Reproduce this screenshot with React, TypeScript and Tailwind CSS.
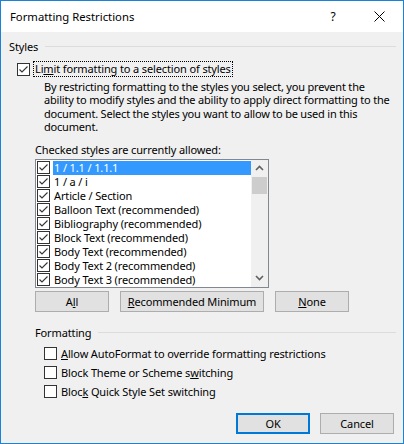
import React from "react";

function Box({ checked, className = "" }: { checked?: boolean; className?: string }) {
  return (
    <div className={"w-[13px] h-[13px] border border-[#333333] bg-white shrink-0 flex items-center justify-center " + className}>
      {checked && (
        <svg width="11" height="11" viewBox="0 0 11 11">
          <polyline points="1.5,5.5 4,8 9.5,2.5" fill="none" stroke="#333333" strokeWidth="1.1" />
        </svg>
      )}
    </div>
  );
}

const items = [
  "1 / 1.1 / 1.1.1",
  "1 / a / i",
  "Article / Section",
  "Balloon Text (recommended)",
  "Bibliography (recommended)",
  "Block Text (recommended)",
  "Body Text (recommended)",
  "Body Text 2 (recommended)",
  "Body Text 3 (recommended)",
  "Book Title",
];

function Btn({ children, className = "" }: { children: React.ReactNode; className?: string }) {
  return (
    <div className={"h-[21px] bg-[#e1e1e1] border border-[#adadad] flex items-center justify-center whitespace-nowrap " + className}>
      {children}
    </div>
  );
}

export default function App() {
  return (
    <div className="w-[404px] h-[444px] border border-[#1883d7] bg-[#f0f0f0] flex flex-col font-['Noto_Sans',sans-serif] text-[11px] tracking-[-0.13px] text-black leading-[15px] overflow-hidden">
      <div className="h-[31px] bg-white flex items-center shrink-0">
        <span className="pl-[9px] text-[11.3px] tracking-normal">Formatting Restrictions</span>
        <div className="ml-auto flex items-center h-full">
          <div className="w-[46px] flex justify-center text-[12px]">?</div>
          <div className="w-[47px] flex justify-center">
            <svg width="11" height="11" viewBox="0 0 11 11">
              <path d="M0.5 0.5 L10.5 10.5 M10.5 0.5 L0.5 10.5" stroke="#000" strokeWidth="1" />
            </svg>
          </div>
        </div>
      </div>

      <div className="flex items-center mt-[7px] pl-[8px] pr-[7px]">
        <span>Styles</span>
        <div className="flex-1 h-px bg-[#dcdcdc] ml-[7px]" />
      </div>

      <div className="flex items-center mt-[7px] pl-[16px]">
        <Box checked />
        <span className="ml-[3px] px-[1px] border border-dotted border-black leading-[14px]">
          Li<u>m</u>it formatting to a selection of styles
        </span>
      </div>

      <div className="mt-[3px] pl-[43px] leading-[13.4px] whitespace-nowrap tracking-[-0.2px]">
        <div>By restricting formatting to the styles you select, you prevent the</div>
        <div>ability to modify styles and the ability to apply direct formatting to the</div>
        <div>document. Select the styles you want to allow to be used in this</div>
        <div>document.</div>
      </div>

      <div className="mt-[8px] pl-[34px]">Checked styles are currently allowed:</div>

      <div className="ml-[34px] mt-[2px] w-[234px] h-[129px] border border-[#828790] bg-white flex overflow-hidden">
        <div className="flex-1 pt-[1px] overflow-hidden">
          {items.map((t, i) => (
            <div key={t} className="h-[14px] flex items-center">
              <Box checked className="ml-[1px]" />
              <span
                className={
                  "ml-[3px] pl-[1px] flex-1 h-[14px] leading-[14px] whitespace-nowrap " +
                  (i === 0 ? "bg-[#3399ff] text-white" : "")
                }
              >
                {t}
              </span>
            </div>
          ))}
        </div>
        <div className="w-[17px] bg-[#f0f0f0] flex flex-col">
          <div className="h-[17px] flex items-center justify-center">
            <svg width="9" height="6" viewBox="0 0 9 6">
              <polyline points="1,5 4.5,1.5 8,5" fill="none" stroke="#606060" strokeWidth="1.6" />
            </svg>
          </div>
          <div className="h-[17px] mx-[1px] bg-[#cdcdcd]" />
          <div className="flex-1" />
          <div className="h-[17px] flex items-center justify-center">
            <svg width="9" height="6" viewBox="0 0 9 6">
              <polyline points="1,1 4.5,4.5 8,1" fill="none" stroke="#606060" strokeWidth="1.6" />
            </svg>
          </div>
        </div>
      </div>

      <div className="flex mt-[3px] pl-[34px] gap-[11px]">
        <Btn className="w-[74px]"><span>A<u>l</u>l</span></Btn>
        <Btn className="w-[144px]"><span><u>R</u>ecommended Minimum</span></Btn>
        <Btn className="w-[74px]"><span><u>N</u>one</span></Btn>
      </div>

      <div className="flex items-center mt-[13px] pl-[34px] pr-[7px]">
        <span>Formatting</span>
        <div className="flex-1 h-px bg-[#dcdcdc] ml-[7px]" />
      </div>

      <div className="flex flex-col gap-[4px] mt-[6px] pl-[43px]">
        <div className="flex items-center">
          <Box />
          <span className="ml-[4px]"><u>A</u>llow AutoFormat to override formatting restrictions</span>
        </div>
        <div className="flex items-center">
          <Box />
          <span className="ml-[4px]">Block Theme or Scheme s<u>w</u>itching</span>
        </div>
        <div className="flex items-center">
          <Box />
          <span className="ml-[4px]">Bloc<u>k</u> Quick Style Set switching</span>
        </div>
      </div>

      <div className="flex justify-end mt-auto mb-[9px] pr-[9px] gap-[10px]">
        <div className="w-[74px] h-[21px] bg-[#e1e1e1] border-2 border-[#0078d7] flex items-center justify-center">OK</div>
        <Btn className="w-[74px]">Cancel</Btn>
      </div>
    </div>
  );
}
